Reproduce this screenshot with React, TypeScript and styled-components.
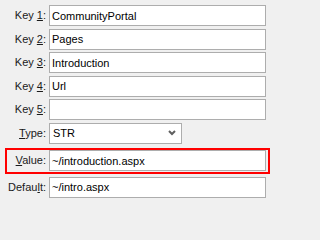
import React from "react";
import styled, { createGlobalStyle } from "styled-components";

const GlobalStyle = createGlobalStyle`
    html, body {
        margin: 0;
        padding: 0;
        background: #f0f0f0;
    }
    body {
        width: 271px;
        height: 202px;
        overflow: hidden;
        font-family: "Liberation Sans", Arial, sans-serif;
        font-size: 11px;
        color: #000;
    }
`;

const Form = styled.div`
    display: flex;
    flex-direction: column;
    gap: 2.5px;
    padding-top: 5px;
`;

const Row = styled.div<{ highlight?: boolean }>`
    display: grid;
    grid-template-columns: ${props => props.highlight ? "39px" : "46px"} 1fr;
    column-gap: 3px;
    align-items: center;
    padding-right: ${props => props.highlight ? "2px" : "5px"};
    padding-bottom: ${props => props.highlight ? "1px" : "0"};
    margin: ${props => props.highlight ? "2px 1px 0 5px" : "0"};
    border: ${props => props.highlight ? "2px solid #ff0000" : "none"};
`;

const Label = styled.label`
    text-align: right;
    white-space: nowrap;
    color: #1a1a1a;
    line-height: 21px;
`;

const Mnemonic = styled.span`
    text-decoration: underline;
    text-underline-offset: 1px;
`;

const TextField = styled.input`
    box-sizing: border-box;
    height: 21px;
    width: 100%;
    margin: 0;
    padding: 0 2px;
    border: 1px solid #adadad;
    background: #fff;
    font-family: "Liberation Sans", Arial, sans-serif;
    font-size: 11px;
    color: #000;
    outline: none;
`;

const Combo = styled.div`
    box-sizing: border-box;
    height: 21px;
    width: 133px;
    display: flex;
    align-items: center;
    justify-content: space-between;
    padding: 0 5px 0 3px;
    border: 1px solid #adadad;
    background: #fff;
`;

function Chevron() {
    return (
        <svg width="8" height="6" viewBox="0 0 8 6">
            <polyline points="1,1 4,4 7,1" fill="none" stroke="#5f5f5f" strokeWidth="2" />
        </svg>
    );
}

function FieldLabel({ before, key_, after }: { before: string; key_: string; after: string }) {
    return (
        <Label>
            {before}<Mnemonic>{key_}</Mnemonic>{after}
        </Label>
    );
}

const keys = ["CommunityPortal", "Pages", "Introduction", "Url", ""];

export default function App() {
    return (
        <>
            <GlobalStyle />
            <Form>
                {keys.map((value, i) => (
                    <Row key={i}>
                        <FieldLabel before="Key " key_={String(i + 1)} after=":" />
                        <TextField defaultValue={value} readOnly />
                    </Row>
                ))}
                <Row>
                    <FieldLabel before="" key_="T" after="ype:" />
                    <Combo>
                        <span>STR</span>
                        <Chevron />
                    </Combo>
                </Row>
                <Row highlight>
                    <FieldLabel before="" key_="V" after="alue:" />
                    <TextField defaultValue="~/introduction.aspx" readOnly />
                </Row>
                <Row>
                    <FieldLabel before="Defau" key_="l" after="t:" />
                    <TextField defaultValue="~/intro.aspx" readOnly />
                </Row>
            </Form>
        </>
    );
}
